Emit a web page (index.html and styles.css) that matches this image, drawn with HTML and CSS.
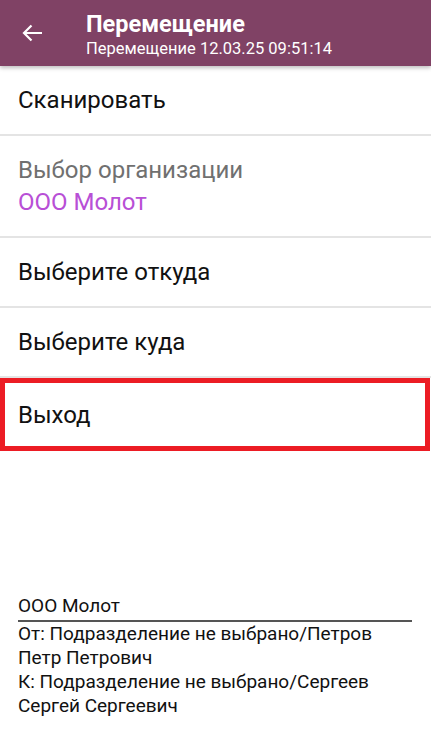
FILE: index.html
```html
<!DOCTYPE html>
<html lang="ru">
<head>
  <meta charset="UTF-8">
  <title>Перемещение</title>
  <link rel="stylesheet" href="styles.css">
</head>
<body>

<div class="screen">
  <div class="toolbar">
    <button class="back-btn">
      <svg width="24" height="24" viewBox="0 0 24 24"><path d="M22 12H4M11.5 4.5L4 12l7.5 7.5" fill="none" stroke="#fff" stroke-width="2.2"/></svg>
    </button>
    <div class="titles">
      <div class="title">Перемещение</div>
      <div class="subtitle">Перемещение 12.03.25 09:51:14</div>
    </div>
  </div>

  <div class="menu">
    <div class="item">Сканировать</div>
    <div class="item item-org">
      <div class="label">Выбор организации</div>
      <div class="value">ООО Молот</div>
    </div>
    <div class="item">Выберите откуда</div>
    <div class="item">Выберите куда</div>
    <div class="item item-exit">Выход</div>
  </div>

  <div class="info">
    <div class="info-org">ООО Молот</div>
    <div class="info-line">От: Подразделение не выбрано/Петров Петр Петрович</div>
    <div class="info-line">К: Подразделение не выбрано/Сергеев Сергей Сергеевич</div>
  </div>
</div>

</body>
</html>
```

FILE: styles.css
```css
body {
  margin: 0;
  font-family: Roboto, "Noto Sans", sans-serif;
  background-color: #fff;
}
.screen {
  display: flex;
  flex-direction: column;
  height: 739px;
}
.toolbar {
  display: flex;
  align-items: center;
  height: 66px;
  background-color: #804265;
  box-shadow: 0 2px 4px rgba(0,0,0,0.25);
  position: relative;
}
.back-btn {
  background: none;
  border: none;
  padding: 0;
  width: 24px;
  height: 24px;
  margin-left: 20px;
  margin-right: 42px;
}
.titles {
  align-self: flex-start;
  padding-top: 10px;
  color: #fff;
}
.title {
  font-size: 23.5px;
  font-weight: bold;
  line-height: 28px;
}
.subtitle {
  font-size: 16.5px;
  line-height: 22px;
}
.menu {
  display: flex;
  flex-direction: column;
}
.item {
  display: flex;
  align-items: center;
  height: 68px;
  padding-left: 18px;
  font-size: 24px;
  color: #111;
  border-bottom: 2px solid #e4e4e4;
}
.item-org {
  flex-direction: column;
  align-items: flex-start;
  justify-content: center;
  height: 100px;
}
.label {
  color: #707070;
  line-height: 32px;
}
.value {
  color: #b84fd6;
  line-height: 32px;
}
.item-exit {
  height: 63px;
  margin-right: 1px;
  padding-left: 13px;
  border: 5px solid #ec1c24;
}
.info {
  margin-top: auto;
  margin-bottom: 21px;
  padding: 0 19px 0 18px;
  font-size: 19px;
  color: #111;
  line-height: 24px;
}
.info-org {
  border-bottom: 2px solid #555;
  padding-bottom: 2px;
}
```
